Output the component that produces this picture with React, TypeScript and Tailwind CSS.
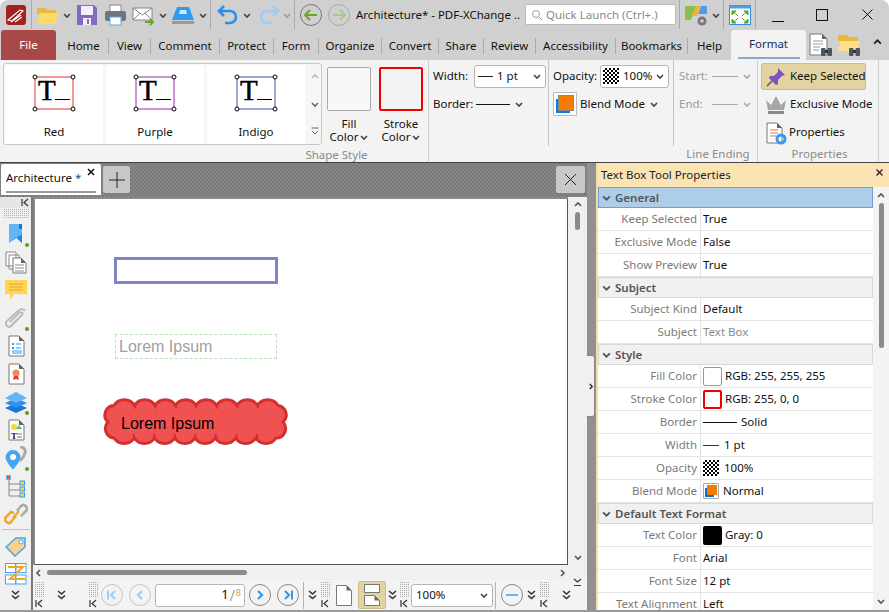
import type { ReactNode } from "react";

/* ── small shared drawings ──────────────────────── */
function Chev({ dir = "down", color = "#444", size = 8, w = 1.6 }: { dir?: "down" | "up" | "left" | "right"; color?: string; size?: number; w?: number }) {
  const d = { down: "M1 3l3 3 3-3", up: "M1 5l3-3 3 3", left: "M5 1L2 4l3 3", right: "M3 1l3 3-3 3" }[dir];
  return (
    <svg width={size} height={size} viewBox="0 0 8 8" className="shrink-0">
      <path d={d} fill="none" stroke={color} strokeWidth={w} />
    </svg>
  );
}

function DoubleChev() {
  return (
    <svg width="9" height="10" viewBox="0 0 9 10" className="shrink-0">
      <path d="M1 1l3.500 3L8 1M1 5.500l3.500 3L8 5.500" fill="none" stroke="#333" strokeWidth="1.600" />
    </svg>
  );
}

function Grip() {
  return (
    <div className="flex w-[10px] shrink-0 flex-col items-center">
      <div className="h-[16px] w-[10px] bg-[repeating-conic-gradient(#a8a8a8_0_25%,transparent_0_100%)] bg-[length:2px_2px]" />
      <svg width="8" height="9" viewBox="0 0 8 9" className="mt-[1px]">
        <path d="M1 1v7M7 1L3 4.500 7 8" fill="none" stroke="#333" strokeWidth="1.200" />
      </svg>
    </div>
  );
}

function Sep({ h = "h-[20px]" }: { h?: string }) {
  return <div className={`w-px shrink-0 bg-[#b4b4b4] ${h}`} />;
}

function Checker({ className }: { className: string }) {
  return <div className={`shrink-0 bg-[repeating-conic-gradient(#000_0_25%,#fff_0_50%)] bg-[length:4px_4px] ${className}`} />;
}

function BlendIcon({ small = false }: { small?: boolean }) {
  return (
    <div className={small ? "relative h-[16px] w-[16px] shrink-0 rounded-[1px] border border-[#aaa] bg-white" : "relative h-[24px] w-[24px] shrink-0 rounded-[1px] border border-[#bbb] bg-white"}>
      <div className={small ? "absolute bottom-[1px] left-[1px] h-[9px] w-[9px] bg-[#0a6fd8]" : "absolute bottom-[2px] left-[2px] h-[14px] w-[14px] bg-[#0a78e8]"} />
      <div className={small ? "absolute right-[1px] top-[1px] h-[10px] w-[10px] bg-[#f57c00]" : "absolute right-[2px] top-[2px] h-[16px] w-[16px] border border-[#888] bg-[#f57c00]"} />
    </div>
  );
}

function DocIcon({ children }: { children?: ReactNode }) {
  return (
    <svg width="22" height="22" viewBox="0 0 22 22" className="shrink-0">
      <path d="M4 1h10l5 5v15H4z" fill="#fff" stroke="#777" strokeWidth="1" />
      <path d="M14 1l5 5h-5z" fill="#666" />
      {children}
    </svg>
  );
}

function RoundNav({ dir, dim = false, bar = false }: { dir: "left" | "right"; dim?: boolean; bar?: boolean }) {
  const c = dim ? "#9fcdf5" : "#2f9bf0";
  return (
    <div className={`grid h-[22px] w-[22px] shrink-0 place-items-center rounded-full border ${dim ? "border-[#c4c4c4]" : "border-[#8a8a8a]"}`}>
      <svg width="12" height="12" viewBox="0 0 12 12">
        {dir === "left" ? <path d={bar ? "M9 2L5 6l4 4" : "M8 2L4 6l4 4"} fill="none" stroke={c} strokeWidth="2.200" /> : <path d={bar ? "M3 2l4 4-4 4" : "M4 2l4 4-4 4"} fill="none" stroke={c} strokeWidth="2.200" />}
        {bar && <path d={dir === "left" ? "M2 1.500v9" : "M10 1.500v9"} stroke={c} strokeWidth="2" />}
      </svg>
    </div>
  );
}

function VBar({ ml }: { ml: string }) {
  return <div className={`h-[29px] w-px shrink-0 bg-[#aaa] ${ml}`} />;
}

/* ── title bar ──────────────────────── */
function TitleBar() {
  return (
    <div className="flex h-[29px] shrink-0 items-center text-[#111]">
      <svg width="20" height="20" viewBox="0 0 20 20" className="ml-[6px] shrink-0">
        <rect width="20" height="20" rx="3" fill="#a32222" />
        <path d="M2 15L14 5l3 1L6 16zM5 17l10-7M9 17l7-5" stroke="#fff" strokeWidth="1.100" fill="none" />
      </svg>
      <VBar ml="ml-[5px]" />
      <svg width="24" height="20" viewBox="0 0 24 20" className="ml-[4px] shrink-0">
        <path d="M1 3h8l2 2h9v4H1z" fill="#e8b83a" />
        <path d="M1 19L4 8h19l-4 11z" fill="#ffd966" />
      </svg>
      <div className="ml-[3px] mr-[5px]"><Chev /></div>
      <svg width="22" height="22" viewBox="0 0 22 22" className="shrink-0">
        <path d="M1 1h17l3 3v17H1z" fill="#8568c4" />
        <rect x="5" y="2" width="12" height="9" fill="#f4f0fb" />
        <rect x="7" y="14" width="8" height="7" fill="#f4f0fb" />
        <rect x="11" y="15" width="2" height="5" fill="#8568c4" />
      </svg>
      <svg width="23" height="22" viewBox="0 0 23 22" className="ml-[6px] shrink-0">
        <rect x="6" y="1" width="11" height="7" fill="#fff" stroke="#888" />
        <rect x="1" y="7" width="21" height="10" rx="2" fill="#6d7680" />
        <rect x="6" y="13" width="11" height="8" fill="#fff" stroke="#5aa7e8" />
      </svg>
      <svg width="23" height="22" viewBox="0 0 23 22" className="ml-[5px] shrink-0">
        <path d="M1 4h19v12H1z" fill="#fff" stroke="#888" />
        <path d="M1 4l9.500 7L20 4M1 16l7-7M20 16l-7-7" fill="none" stroke="#888" />
        <path d="M13 18h7M18 15l3 3-3 3" fill="none" stroke="#69a82f" strokeWidth="2" />
      </svg>
      <div className="ml-[4px] mr-[4px]"><Chev /></div>
      <svg width="24" height="18" viewBox="0 0 24 18" className="shrink-0">
        <path d="M6 1h12l5 13H1z" fill="#2f9bf0" />
        <path d="M9 4h6l1 4H8z" fill="#cfe8fb" />
        <rect x="1" y="15" width="22" height="3" fill="#9a9a9a" />
      </svg>
      <div className="ml-[4px] mr-[3px]"><Chev /></div>
      <VBar ml="" />
      <svg width="22" height="20" viewBox="0 0 22 20" className="ml-[6px] shrink-0">
        <path d="M7 1L2 6l5 5M2 6h11a6 6 0 0 1 0 12H8" fill="none" stroke="#2f8fe8" strokeWidth="2.600" />
      </svg>
      <div className="ml-[4px] mr-[7px]"><Chev /></div>
      <svg width="22" height="20" viewBox="0 0 22 20" className="shrink-0">
        <path d="M15 1l5 5-5 5M20 6H9a6 6 0 0 0 0 12h5" fill="none" stroke="#9fcdf5" strokeWidth="2.600" />
      </svg>
      <div className="ml-[3px] mr-[3px]"><Chev color="#999" /></div>
      <VBar ml="" />
      <div className="ml-[5px] grid h-[22px] w-[22px] shrink-0 place-items-center rounded-full border border-[#777]">
        <svg width="14" height="12" viewBox="0 0 14 12"><path d="M6 1L1 6l5 5M1 6h12" fill="none" stroke="#6aa52d" strokeWidth="2" /></svg>
      </div>
      <div className="ml-[6px] grid h-[22px] w-[22px] shrink-0 place-items-center rounded-full border border-[#aaa]">
        <svg width="14" height="12" viewBox="0 0 14 12"><path d="M8 1l5 5-5 5M13 6H1" fill="none" stroke="#a8c88c" strokeWidth="2" /></svg>
      </div>
      <div className="ml-[6px] w-[165px] shrink-0 whitespace-nowrap">Architecture* - PDF-XChange ..</div>
      <div className="ml-[4px] flex h-[21px] w-[151px] shrink-0 items-center rounded-[2px] border border-[#bbb] bg-white pl-[5px] text-[#8a8a8a]">
        <svg width="12" height="12" viewBox="0 0 12 12" className="mr-[3px]"><circle cx="5" cy="5" r="3.500" fill="none" stroke="#999" /><path d="M8 8l3 3" stroke="#999" /></svg>
        Quick Launch (Ctrl+.)
      </div>
      <VBar ml="ml-[3px]" />
      <svg width="24" height="24" viewBox="0 0 24 24" className="ml-[4px] shrink-0">
        <path d="M1 3h11L7 17H1z" fill="#8cbf4a" />
        <path d="M12 3h4l-3 10H8z" fill="#f2b33d" />
        <path d="M17 3h6v8h-9z" fill="#4f9de8" />
        <circle cx="18" cy="18" r="4.500" fill="#777" />
        <circle cx="18" cy="18" r="1.800" fill="#d0d0d0" />
      </svg>
      <div className="ml-[4px] mr-[3px]"><Chev /></div>
      <VBar ml="" />
      <svg width="22" height="20" viewBox="0 0 22 20" className="ml-[5px] shrink-0">
        <rect x="0.500" y="0.500" width="21" height="19" fill="#fff" stroke="#2f8fe8" />
        <rect x="0.500" y="0.500" width="21" height="3" fill="#4aa0ee" />
        <path d="M3 6h4L3 10zM19 6h-4l4 4zM3 18h4l-4-4zM19 18h-4l4-4zM6 8l3 3M16 8l-3 3M6 16l3-3M16 16l-3-3" fill="#5aa52c" stroke="#5aa52c" />
      </svg>
      <VBar ml="ml-[4px]" />
      <div className="ml-[16px] mt-[13px] h-px w-[12px] shrink-0 bg-[#111]" />
      <div className="ml-[32px] h-[12px] w-[12px] shrink-0 border border-[#111]" />
      <svg width="11" height="11" viewBox="0 0 11 11" className="ml-[34px] shrink-0"><path d="M0.500 0.500l10 10M10.500 0.500l-10 10" stroke="#111" /></svg>
    </div>
  );
}

/* ── menu tabs ──────────────────────── */
const tabs: [string, string][] = [
  ["Home", "w-[50px]"],
  ["View", "w-[42px]"],
  ["Comment", "w-[69px]"],
  ["Protect", "w-[54px]"],
  ["Form", "w-[45px]"],
  ["Organize", "w-[63px]"],
  ["Convert", "w-[57px]"],
  ["Share", "w-[45px]"],
  ["Review", "w-[52px]"],
  ["Accessibility", "w-[80px]"],
  ["Bookmarks", "w-[72px]"],
];

function Binoculars() {
  return (
    <g>
      <rect x="12" y="15" width="4.500" height="8" rx="1" fill="#4a5560" />
      <rect x="18.500" y="15" width="4.500" height="8" rx="1" fill="#4a5560" />
      <rect x="16" y="17" width="3" height="3" fill="#333" />
    </g>
  );
}

function MenuTabs() {
  return (
    <div className="flex h-[31px] shrink-0 items-end text-[#111]">
      <div className="ml-px flex h-[30px] w-[55px] shrink-0 items-center justify-center rounded-t-[3px] bg-[#a94848] text-white">File</div>
      <div className="ml-[3px] flex h-[28px] items-center">
        {tabs.map(([t, w]) => (
          <div key={t} className={`flex h-[16px] shrink-0 items-center justify-center border-r border-[#aaa] ${w}`}>{t}</div>
        ))}
        <div className="flex w-[43px] shrink-0 items-center justify-center">Help</div>
      </div>
      <div className="flex h-[30px] w-[75px] shrink-0 flex-col items-center rounded-t-[3px] bg-[#f3f3f3] text-[#1a2a5a]">
        <div className="flex flex-1 items-center">Format</div>
        <div className="mb-px h-[2px] w-[62px] bg-[#8aa9c9]" />
      </div>
      <div className="mb-[3px] ml-[3px] flex items-center">
        <svg width="24" height="24" viewBox="0 0 24 24" className="shrink-0">
          <path d="M1 1h12l5 5v16H1z" fill="#fff" stroke="#777" />
          <path d="M13 1l5 5h-5z" fill="#666" />
          <path d="M4 8h10M4 11h10M4 14h7M4 17h6" stroke="#999" />
          <Binoculars />
        </svg>
        <svg width="24" height="24" viewBox="0 0 24 24" className="ml-[4px] shrink-0">
          <path d="M1 2h9l2 2h9v4H1z" fill="#e8b83a" />
          <path d="M1 18L4 8h19l-3 10z" fill="#ffe08a" />
          <Binoculars />
        </svg>
        <div className="ml-[12px] mb-[6px]"><Chev dir="up" color="#222" size={9} /></div>
      </div>
    </div>
  );
}

/* ── ribbon ──────────────────────── */
function Shape({ name, color }: { name: string; color: string }) {
  return (
    <div className="flex h-[79px] w-[98px] shrink-0 flex-col items-center bg-white">
      <svg width="44" height="40" viewBox="0 0 44 40" className="mt-[8px]">
        <rect x="3" y="4" width="38" height="32" fill="none" stroke={color} />
        <text x="6" y="27" fontFamily="'Liberation Serif', serif" fontSize="29" stroke="#000" strokeWidth="0.500" fill="#000">T</text>
        <path d="M23 26.500h15" stroke="#000" />
        {[[3, 4], [41, 4], [3, 36], [41, 36]].map(([x, y]) => (
          <circle key={`${x}${y}`} cx={x} cy={y} r="2" fill="#fff" stroke="#000" />
        ))}
      </svg>
      <div className="mt-[11px] leading-[16px] text-[#111]">{name}</div>
    </div>
  );
}

function GroupLabel({ children }: { children: ReactNode }) {
  return <div className="text-center text-[11.500px] leading-[14px] text-[#8a8a8a]">{children}</div>;
}

function Ribbon() {
  return (
    <div className="flex h-[102px] shrink-0 bg-[#f3f3f3] text-[#111]">
      {/* shape style */}
      <div className="flex w-[429px] shrink-0 flex-col border-r border-[#cfcfcf] pl-[3px]">
        <div className="flex pt-[3px]">
          <div className="flex h-[82px] w-[319px] shrink-0 items-center gap-[3px] rounded-[3px] border border-[#c8c8c8] bg-[#f6f6f6] pl-px">
            <Shape name="Red" color="#e53935" />
            <Shape name="Purple" color="#9c27b0" />
            <Shape name="Indigo" color="#3f51b5" />
            <div className="flex h-full flex-1 flex-col items-center justify-between py-[9px]">
              <Chev dir="up" color="#bbb" />
              <Chev color="#666" />
              <svg width="8" height="8" viewBox="0 0 8 8"><path d="M0.500 1h7M1 4l3 3 3-3" fill="none" stroke="#666" /></svg>
            </div>
          </div>
          <div className="ml-[5px] flex w-[44px] shrink-0 flex-col items-center">
            <div className="mt-[4px] h-[44px] w-[44px] shrink-0 rounded-[2px] border border-[#aaa] bg-[#f8f8f8]" />
            <div className="mt-[6px] leading-[13px]">Fill</div>
            <div className="flex items-center gap-[2px] leading-[13px]">Color <Chev /></div>
          </div>
          <div className="ml-[8px] flex w-[44px] shrink-0 flex-col items-center">
            <div className="mt-[4px] h-[44px] w-[44px] shrink-0 rounded-[2px] border-2 border-[#f00000] bg-[#f3f3f3]" />
            <div className="mt-[6px] leading-[13px]">Stroke</div>
            <div className="flex items-center gap-[2px] leading-[13px]">Color <Chev /></div>
          </div>
        </div>
        <div className="ml-[242px] mt-[3px]"><GroupLabel>Shape Style</GroupLabel></div>
      </div>
      {/* width / border */}
      <div className="flex h-[86px] w-[120px] shrink-0 flex-col border-r border-[#c4c4c4] pl-[4px] pt-[4px]">
        <div className="flex h-[24px] items-center">
          <span className="w-[37px]">Width:</span>
          <div className="ml-[4px] flex h-[23px] w-[72px] items-center rounded-[3px] border border-[#b5b5b5] bg-white pl-[3px]">
            <div className="h-px w-[15px] bg-[#222]" />
            <span className="ml-[4px]">1 pt</span>
            <div className="ml-auto mr-[4px]"><Chev /></div>
          </div>
        </div>
        <div className="mt-[4px] flex h-[24px] items-center">
          <span className="w-[43px]">Border:</span>
          <div className="h-px w-[34px] bg-[#111]" />
          <div className="ml-[5px]"><Chev /></div>
        </div>
      </div>
      {/* opacity / blend */}
      <div className="flex h-[86px] w-[125px] shrink-0 flex-col border-r border-[#c4c4c4] pl-[4px] pt-[4px]">
        <div className="flex h-[24px] items-center">
          <span className="w-[47px]">Opacity:</span>
          <div className="flex h-[23px] w-[69px] items-center rounded-[3px] border border-[#b5b5b5] bg-white pl-[2px]">
            <Checker className="h-[16px] w-[16px]" />
            <span className="ml-[4px]">100%</span>
            <div className="ml-auto mr-[4px]"><Chev /></div>
          </div>
        </div>
        <div className="mt-[4px] flex h-[24px] items-center">
          <BlendIcon />
          <span className="ml-[3px]">Blend Mode</span>
          <div className="ml-[5px]"><Chev /></div>
        </div>
      </div>
      {/* line ending */}
      <div className="flex w-[84px] shrink-0 flex-col border-r border-[#cfcfcf] pl-[5px] pt-[4px] text-[#9a9a9a]">
        <div className="flex h-[24px] items-center">
          <span className="w-[33px]">Start:</span>
          <div className="h-px w-[26px] bg-[#aaa]" />
          <div className="ml-[5px]"><Chev color="#aaa" /></div>
        </div>
        <div className="mt-[4px] flex h-[24px] items-center">
          <span className="w-[33px]">End:</span>
          <div className="h-px w-[26px] bg-[#aaa]" />
          <div className="ml-[5px]"><Chev color="#aaa" /></div>
        </div>
        <div className="mt-auto mb-[1px]"><GroupLabel>Line Ending</GroupLabel></div>
      </div>
      {/* properties */}
      <div className="flex w-[121px] shrink-0 flex-col border-r border-[#cfcfcf] pl-[3px] pt-[3px]">
        <div className="flex h-[27px] w-[105px] items-center whitespace-nowrap rounded-[2px] border border-[#cdbd8d] bg-[#e3d3a3] pl-[3px]">
          <svg width="22" height="22" viewBox="0 0 22 22" className="shrink-0">
            <path d="M13 2l7 7-3 1-4 4 0 4-2 1-7-7 1-2 4 0 4-4z" fill="#7a55c0" />
            <path d="M7 15l-5 5" stroke="#555" strokeWidth="1.500" />
          </svg>
          <span className="mb-[2px] ml-[3px]">Keep Selected</span>
        </div>
        <div className="mt-[1px] flex h-[28px] items-center whitespace-nowrap pl-[3px]">
          <svg width="24" height="22" viewBox="0 0 24 22" className="shrink-0">
            <path d="M2 6l5 5 5-9 5 9 5-5-2 10H4z" fill="#a6a6a6" />
            <rect x="4" y="17" width="16" height="3" fill="#8a8a8a" />
          </svg>
          <span className="mb-[2px] ml-[2px]">Exclusive Mode</span>
        </div>
        <div className="flex h-[28px] items-center pl-[2px]">
          <div className="relative">
            <DocIcon>
              <path d="M7 8h8M7 11h8M7 14h6" stroke="#e07050" />
            </DocIcon>
            <svg width="12" height="12" viewBox="0 0 12 12" className="absolute -bottom-px -right-[2px]">
              <circle cx="6" cy="6" r="4" fill="none" stroke="#2f9bf0" strokeWidth="3" />
            </svg>
          </div>
          <span className="mb-[2px] ml-[4px]">Properties</span>
        </div>
        <div className="mt-auto mb-[1px]"><GroupLabel>Properties</GroupLabel></div>
      </div>
    </div>
  );
}

/* ── left tool column ──────────────────────── */
function SideIcon({ children, dot = false }: { children: ReactNode; dot?: boolean }) {
  return (
    <div className="relative flex h-[28px] w-full shrink-0 items-center justify-center">
      {children}
      {dot && <div className="absolute bottom-[1px] right-[2px] h-[4px] w-[4px] rounded-full bg-[#5a9e1f]" />}
    </div>
  );
}

function Sidebar() {
  return (
    <div className="flex w-[33px] shrink-0 flex-col items-center border-r-2 border-[#777] bg-[#f0f0f0]">
      <div className="flex h-[11px] w-full shrink-0 items-center justify-end bg-[#e6e6e6] pr-[2px]">
        <svg width="8" height="9" viewBox="0 0 8 9"><path d="M1 1v7M7 1L3 4.500 7 8" fill="none" stroke="#333" strokeWidth="1.200" /></svg>
      </div>
      <div className="mb-[2px] mt-[1px] h-[9px] w-[26px] shrink-0 bg-[repeating-conic-gradient(#b0b0b0_0_25%,transparent_0_100%)] bg-[length:2px_2px]" />
      <SideIcon dot>
        <svg width="16" height="22" viewBox="0 0 16 22"><path d="M1 1h13v19l-6.500-6L1 20z" fill="#64b5f6" /><path d="M1 20l6.500-6 6.500 6v-9z" fill="#1e88e5" /><path d="M11 1h3v5h-3z" fill="#1976d2" /></svg>
      </SideIcon>
      <SideIcon>
        <svg width="22" height="23" viewBox="0 0 22 23">
          <path d="M1 1h10v14H1zM4 4h10v14H4z" fill="#fff" stroke="#888" />
          <path d="M8 7h8l5 5v10H8z" fill="#fff" stroke="#777" />
          <path d="M16 7l5 5h-5z" fill="#666" />
          <path d="M10 14h9M10 17h9M10 20h9" stroke="#888" />
        </svg>
      </SideIcon>
      <SideIcon>
        <svg width="22" height="22" viewBox="0 0 22 22">
          <path d="M0 1h22v14H9l-4 6v-6H0z" fill="#ffd54f" />
          <path d="M4 5h14M4 8h14M4 11h14" stroke="#e6a23c" />
        </svg>
      </SideIcon>
      <SideIcon dot>
        <svg width="24" height="22" viewBox="0 0 24 22">
          <path d="M21 4c-2-3-5-2-7 0L3 14c-3 3 1 8 4 5l11-11c2-2-1-4-3-2L6 15" fill="none" stroke="#b8b8b8" strokeWidth="1.800" />
        </svg>
      </SideIcon>
      <SideIcon>
        <DocIcon>
          <path d="M7 8h2v2H7zM7 12h2v2H7z" fill="#2f9bf0" />
          <path d="M11 9h5M11 13h5M7 16h10M7 18h10" stroke="#2f9bf0" />
        </DocIcon>
      </SideIcon>
      <SideIcon>
        <DocIcon>
          <circle cx="11" cy="10" r="3.500" fill="#f08a5a" />
          <path d="M9 13l-1 4 3-1 3 1-1-4" fill="#e53935" />
        </DocIcon>
      </SideIcon>
      <SideIcon dot>
        <svg width="24" height="22" viewBox="0 0 24 22">
          <path d="M12 12L1 17l11 5 11-5z" fill="#1976d2" />
          <path d="M12 7L1 12l11 5 11-5z" fill="#2f8fe8" />
          <path d="M12 1L1 7l11 5 11-5z" fill="#64b5f6" />
        </svg>
      </SideIcon>
      <SideIcon>
        <DocIcon>
          <circle cx="9" cy="8" r="3" fill="#fdd835" />
          <path d="M11 10l3-4 3 4z" fill="#66bb6a" />
          <text x="6" y="20" fontFamily="'Liberation Serif', serif" fontWeight="700" fontSize="9" fill="#222">T</text>
          <path d="M12 15h5M12 18h5" stroke="#777" />
        </DocIcon>
      </SideIcon>
      <SideIcon dot>
        <svg width="24" height="24" viewBox="0 0 24 24">
          <path d="M16 1c4 0 6 3 5 6-1 4-5 8-5 8" fill="none" stroke="#aaa" strokeWidth="3" />
          <path d="M9 4a7.500 7.500 0 0 1 7.500 7.500c0 4-7.500 12-7.500 12S1.500 15.500 1.500 11.500A7.500 7.500 0 0 1 9 4z" fill="#42a5f5" />
          <circle cx="9" cy="11" r="3" fill="#fff" />
        </svg>
      </SideIcon>
      <SideIcon>
        <svg width="20" height="23" viewBox="0 0 20 23">
          <path d="M3 5v16h11M3 9h11M3 15h11" fill="none" stroke="#888" />
          <rect x="0.500" y="0.500" width="4" height="4" fill="#f4511e" stroke="#64b5f6" />
          <rect x="14" y="6" width="4.500" height="4" fill="#ffd54f" stroke="#2f9bf0" />
          <rect x="14" y="12" width="4.500" height="4" fill="#ffd54f" stroke="#2f9bf0" />
          <rect x="14" y="18" width="4.500" height="4" fill="#ffd54f" stroke="#2f9bf0" />
        </svg>
      </SideIcon>
      <SideIcon>
        <svg width="24" height="22" viewBox="0 0 24 22">
          <path d="M13 8l4-5c3-3 8 2 5 5l-5 5" fill="none" stroke="#aaa" strokeWidth="2.500" />
          <path d="M12 13l-5 6c-3 3-8-2-5-5l5-5 3 1" fill="none" stroke="#f5a623" strokeWidth="2.500" />
          <path d="M9 15l6-7" stroke="#f5a623" strokeWidth="2.500" />
        </svg>
      </SideIcon>
      <div className="mt-px mb-[2px] h-px w-[28px] shrink-0 bg-[#c4c4c4]" />
      <SideIcon>
        <svg width="22" height="22" viewBox="0 0 22 22">
          <path d="M11 3h9v9L10 21 1 12z" fill="#ffd08a" stroke="#42a5f5" strokeWidth="1.500" />
          <circle cx="16" cy="7" r="2" fill="#fff" stroke="#42a5f5" />
        </svg>
      </SideIcon>
      <SideIcon>
        <svg width="22" height="22" viewBox="0 0 22 22">
          <rect x="0.500" y="0.500" width="10" height="9" fill="#fff" stroke="#42a5f5" />
          <rect x="11" y="0.500" width="10" height="9" fill="#fff" stroke="#42a5f5" />
          <rect x="0.500" y="12" width="10" height="9" fill="#fff" stroke="#42a5f5" />
          <rect x="11" y="12" width="10" height="9" fill="#fff" stroke="#42a5f5" />
          <path d="M3 4h15L5 16h15" fill="none" stroke="#f5a623" strokeWidth="2" />
        </svg>
      </SideIcon>
      <div className="mt-[2px]"><DoubleChev /></div>
    </div>
  );
}

/* ── cloud annotation ──────────────────────── */
function scallops() {
  let d = "M11 8.500";
  for (let i = 0; i < 8; i++) d += "a12 12 0 0 1 20.500 0";
  d += "A9.500 9.500 0 0 1 180 25A9.500 9.500 0 0 1 173 41";
  for (let i = 0; i < 8; i++) d += "a12 12 0 0 1 -20.250 0";
  d += "A9.500 9.500 0 0 1 5 25A9.500 9.500 0 0 1 11 8.500z";
  return d;
}

const cusps = [31.500, 52, 72.500, 93, 113.500, 134, 154.500];

function Page() {
  return (
    <div className="relative min-w-0 flex-1 bg-white shadow-[inset_2px_2px_0_#8a8a8a,inset_-1px_-1px_0_#555]">
      <div className="absolute left-[81px] top-[60px] h-[27px] w-[164px] border-[3px] border-[#7e86c8]" />
      <div className="absolute left-[82px] top-[137px] flex h-[25px] w-[162px] items-center border border-dashed border-[#b8e0b4] pl-[3px] font-['Liberation_Sans',sans-serif] text-[16px] text-[#a0a0a0]">Lorem Ipsum</div>
      <div className="absolute left-[70px] top-[200px] h-[52px] w-[187px]">
        <svg width="187" height="52" viewBox="0 0 187 52" className="absolute inset-0">
          <path d={scallops()} fill="#f05252" stroke="#d32f2f" strokeWidth="3" strokeLinejoin="round" />
          {cusps.map((x) => (
            <path key={x} d={`M${x} 8.500l1 3M${x} 41l-1-4`} stroke="#d32f2f" strokeWidth="2" />
          ))}
        </svg>
        <div className="absolute left-[18px] top-[17px] whitespace-nowrap font-['Liberation_Sans',sans-serif] text-[16px] leading-[20px] text-black">Lorem Ipsum</div>
      </div>
    </div>
  );
}

/* ── bottom page toolbar ──────────────────────── */
function PageBar() {
  return (
    <div className="flex h-[30px] shrink-0 items-center bg-[#f3f3f3] text-[#111]">
      <div className="ml-px"><Grip /></div>
      <div className="ml-[13px] mr-[22px]"><DoubleChev /></div>
      <Grip />
      <div className="ml-[3px]"><RoundNav dir="left" dim bar /></div>
      <div className="ml-[6px]"><RoundNav dir="left" dim /></div>
      <div className="ml-[4px] flex h-[23px] w-[90px] shrink-0 items-center justify-end rounded-[3px] border border-[#b5b5b5] bg-white pr-[3px]">
        <span className="text-[13px]">1</span>
        <span className="mx-[1px] text-[15px] font-light text-[#777]">/</span>
        <span className="-mt-[5px] text-[9px] text-[#e09a3a]">8</span>
      </div>
      <div className="ml-[4px]"><RoundNav dir="right" /></div>
      <div className="ml-[6px]"><RoundNav dir="right" bar /></div>
      <div className="ml-[4px]"><Sep h="h-[27px]" /></div>
      <div className="ml-[4px] mr-[3px]"><DoubleChev /></div>
      <Grip />
      <svg width="16" height="21" viewBox="0 0 16 21" className="ml-[6px] shrink-0">
        <path d="M0.500 0.500h10l5 5v15H0.500z" fill="#fff" stroke="#777" />
        <path d="M10.500 0.500l5 5h-5z" fill="#666" />
      </svg>
      <div className="ml-[6px] flex h-[28px] w-[28px] shrink-0 flex-col items-center justify-center gap-[2px] rounded-[2px] border border-[#cdbd8d] bg-[#e3d3a3]">
        <div className="h-[9px] w-[16px] border border-[#777] bg-white" />
        <svg width="16" height="11" viewBox="0 0 16 11">
          <path d="M0.500 0.500h10l5 5v5H0.500z" fill="#fff" stroke="#777" />
          <path d="M10.500 0.500l5 5h-5z" fill="#666" />
        </svg>
      </div>
      <div className="ml-[2px] mr-[2px]"><DoubleChev /></div>
      <Grip />
      <div className="ml-[2px] flex h-[23px] w-[82px] shrink-0 items-center rounded-[3px] border border-[#b5b5b5] bg-white pl-[4px]">
        100%
        <div className="ml-auto mr-[4px]"><Chev /></div>
      </div>
      <div className="ml-[2px]"><Sep h="h-[27px]" /></div>
      <div className="ml-[5px] grid h-[22px] w-[22px] shrink-0 place-items-center rounded-full border border-[#8a8a8a]">
        <div className="h-[2px] w-[12px] bg-[#64b5f6]" />
      </div>
      <div className="ml-[4px] mr-[3px]"><DoubleChev /></div>
      <Grip />
      <div className="ml-[13px]"><DoubleChev /></div>
      <svg width="9" height="9" viewBox="0 0 9 9" className="-mt-[26px] ml-[2px] shrink-0"><path d="M1 1l3.500 3L8 1M1 7.500h7" fill="none" stroke="#333" strokeWidth="1.200" /></svg>
    </div>
  );
}

function DocArea() {
  return (
    <div className="flex w-[587px] shrink-0 flex-col bg-[#f0f0f0]">
      {/* document tab strip */}
      <div className="flex h-[34px] shrink-0 items-start bg-[repeating-conic-gradient(#7a7a7a_0_25%,#868686_0_50%)] bg-[length:4px_4px] pt-[1px]">
        <div className="relative ml-px flex h-[31px] w-[100px] shrink-0 flex-col rounded-t-[2px] bg-white pl-[5px] text-[#111]">
          <div className="mt-[6px] leading-[16px]">Architecture <span className="text-[#0a5aa8]">*</span></div>
          <svg width="8" height="8" viewBox="0 0 8 8" className="absolute right-[6px] top-[4px]"><path d="M1 1l6 6M7 1L1 7" stroke="#111" strokeWidth="1.500" /></svg>
          <div className="mt-auto mb-[2px] h-[2px] w-[90px] bg-[#9a9a9a]" />
        </div>
        <div className="ml-[2px] mt-[2px] grid h-[27px] w-[27px] shrink-0 place-items-center rounded-[2px] bg-[#c8c8c8]">
          <svg width="16" height="16" viewBox="0 0 16 16"><path d="M8 0v16M0 8h16" stroke="#222" /></svg>
        </div>
        <div className="ml-auto mr-[2px] mt-[2px] grid h-[27px] w-[29px] shrink-0 place-items-center rounded-[2px] bg-[#c8c8c8]">
          <svg width="13" height="13" viewBox="0 0 13 13"><path d="M1 1l11 11M12 1L1 12" stroke="#222" /></svg>
        </div>
      </div>
      <div className="flex min-h-0 flex-1">
        <Sidebar />
        <div className="flex min-w-0 flex-1 flex-col">
          <div className="flex min-h-0 flex-1">
            <Page />
            <div className="flex w-[19px] shrink-0 flex-col items-center bg-[#f0f0f0] py-[4px]">
              <Chev dir="up" color="#555" />
              <div className="mt-[3px] h-[18px] w-[5px] rounded-full bg-[#8a8a8a]" />
              <div className="mt-auto"><Chev color="#555" /></div>
            </div>
          </div>
          <div className="flex h-[15px] shrink-0 items-center bg-[#f0f0f0] pl-[2px] pr-[21px]">
            <Chev dir="left" color="#555" />
            <div className="ml-[4px] h-[5px] w-[200px] rounded-full bg-[#8a8a8a]" />
            <div className="ml-auto"><Chev dir="right" color="#555" /></div>
          </div>
          <PageBar />
        </div>
      </div>
    </div>
  );
}

/* ── properties panel ──────────────────────── */
type Row = { k: string; v?: ReactNode; muted?: boolean } | { head: string; sel?: boolean };

const rows: Row[] = [
  { head: "General", sel: true },
  { k: "Keep Selected", v: "True" },
  { k: "Exclusive Mode", v: "False" },
  { k: "Show Preview", v: "True" },
  { head: "Subject" },
  { k: "Subject Kind", v: "Default" },
  { k: "Subject", v: "Text Box", muted: true },
  { head: "Style" },
  { k: "Fill Color", v: <Swatch cls="border border-[#999] bg-white" text="RGB: 255, 255, 255" /> },
  { k: "Stroke Color", v: <Swatch cls="border-2 border-[#f00000] bg-white" text="RGB: 255, 0, 0" /> },
  {
    k: "Border",
    v: (
      <span className="flex items-center">
        <span className="h-px w-[34px] bg-[#111]" />
        <span className="ml-[4px]">Solid</span>
      </span>
    ),
  },
  {
    k: "Width",
    v: (
      <span className="flex items-center">
        <span className="h-px w-[16px] bg-[#333]" />
        <span className="ml-[5px]">1 pt</span>
      </span>
    ),
  },
  {
    k: "Opacity",
    v: (
      <span className="flex items-center">
        <Checker className="h-[16px] w-[16px]" />
        <span className="ml-[5px]">100%</span>
      </span>
    ),
  },
  {
    k: "Blend Mode",
    v: (
      <span className="flex items-center">
        <BlendIcon small />
        <span className="ml-[4px]">Normal</span>
      </span>
    ),
  },
  { head: "Default Text Format" },
  { k: "Text Color", v: <Swatch cls="bg-black" text="Gray: 0" /> },
  { k: "Font", v: "Arial" },
  { k: "Font Size", v: "12 pt" },
  { k: "Text Alignment", v: "Left" },
];

function Swatch({ cls, text }: { cls: string; text: string }) {
  return (
    <span className="flex items-center">
      <span className={`h-[19px] w-[19px] shrink-0 rounded-[2px] ${cls}`} />
      <span className="ml-[3px]">{text}</span>
    </span>
  );
}

function PropsPanel() {
  return (
    <div className="flex min-w-0 flex-1 flex-col overflow-hidden border-l-2 border-[#f5dfa8] bg-white">
      <div className="relative flex h-[24px] shrink-0 items-center bg-[#fbe4b4] pl-[3px] text-[#222]">
        Text Box Tool Properties
        <svg width="7" height="7" viewBox="0 0 7 7" className="absolute right-[6px] top-[6px]"><path d="M0.500 0.500l6 6M6.500 0.500l-6 6" stroke="#222" strokeWidth="1.300" /></svg>
      </div>
      <div className="flex min-h-0 flex-1">
        <div className="min-w-0 flex-1 overflow-hidden">
          {rows.map((r) =>
            "head" in r ? (
              <div key={r.head} className={`flex h-[21px] items-center border ${r.sel ? "border-[#6f9fcc] bg-[#aecde8]" : "border-[#d8d8d8] bg-[#f0f0f0]"} pl-[3px] font-semibold text-[#555]`}>
                <Chev color="#555" size={9} />
                <span className="ml-[4px]">{r.head}</span>
              </div>
            ) : (
              <div key={r.k} className="flex h-[23px] items-center border-b border-[#e4e4e4]">
                <div className="w-[102px] shrink-0 whitespace-nowrap pr-[3px] text-right text-[#7a7a7a]">{r.k}</div>
                <div className={`flex h-full flex-1 items-center border-l border-[#e4e4e4] pl-[2px] ${r.muted ? "text-[#8a8a8a]" : "text-[#111]"}`}>{r.v}</div>
              </div>
            )
          )}
        </div>
        <div className="flex w-[16px] shrink-0 flex-col items-center bg-[#f3f3f3] py-[5px]">
          <Chev dir="up" color="#555" />
          <div className="mt-[3px] h-[145px] w-[5px] rounded-full bg-[#8a8a8a]" />
          <div className="mt-auto"><Chev color="#555" /></div>
        </div>
      </div>
    </div>
  );
}

export default function App() {
  return (
    <div className="h-[612px] w-[889px] overflow-hidden bg-white">
      <div className="flex h-full w-full flex-col overflow-hidden rounded-t-[8px] bg-[#d0d0d0] font-['Noto_Sans',sans-serif] text-[11.500px]">
        <TitleBar />
        <MenuTabs />
        <Ribbon />
        <div className="h-px shrink-0 bg-[#444]" />
        <div className="flex min-h-0 flex-1 border-b-2 border-[#999]">
          <DocArea />
          {/* splitter */}
          <div className="relative w-[9px] shrink-0 bg-[repeating-conic-gradient(#8a8a8a_0_25%,#989898_0_50%)] bg-[length:4px_4px]">
            <div className="absolute left-0 top-[192px] flex h-[62px] w-[8px] items-center justify-center rounded-r-[3px] border border-l-0 border-[#888] bg-[#f0f0f0]">
              <Chev dir="right" color="#222" size={7} />
            </div>
          </div>
          <PropsPanel />
        </div>
      </div>
    </div>
  );
}
